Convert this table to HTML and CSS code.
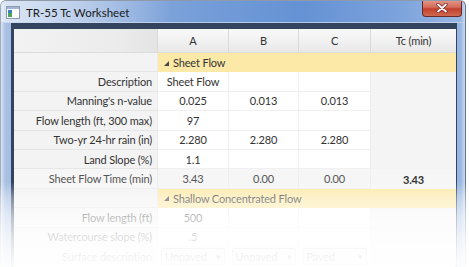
FILE: index.html
```html
<!DOCTYPE html>
<html>
<head>
<meta charset="utf-8">
<link rel="stylesheet" href="styles.css">
</head>
<body>
<div class="window">
  <div class="titlebar">
    <svg class="appicon" width="14" height="13" viewBox="0 0 14 13">
      <rect x="0.5" y="0.5" width="13" height="12" fill="#fdfdfd" stroke="#8a9bb0"/>
      <rect x="1" y="1" width="12" height="2" fill="#9fb8d8"/>
      <rect x="2" y="4" width="4" height="7" fill="#4da35a"/>
      <rect x="2" y="4" width="4" height="3" fill="#3f7fc0"/>
    </svg>
    <span class="title">TR-55 Tc Worksheet</span>
    <div class="close">
      <svg width="14" height="10" viewBox="0 0 14 10">
        <path d="M3 1.5 L11 8.5 M11 1.5 L3 8.5" stroke="#7a2a24" stroke-width="3.4" stroke-linecap="round"/>
        <path d="M3 1.5 L11 8.5 M11 1.5 L3 8.5" stroke="#ffffff" stroke-width="1.8" stroke-linecap="round"/>
      </svg>
    </div>
  </div>
  <div class="client">
    <div class="grid">
      <div class="hdr lblh"></div>
      <div class="hdr">A</div>
      <div class="hdr">B</div>
      <div class="hdr">C</div>
      <div class="hdr last">Tc (min)</div>

      <div class="lbl"></div>
      <div class="grp"><span class="tri"></span>Sheet Flow</div>

      <div class="lbl">Description</div>
      <div class="cell">Sheet Flow</div><div class="cell"></div><div class="cell"></div><div class="tc"></div>

      <div class="lbl">Manning's n-value</div>
      <div class="cell">0.025</div><div class="cell">0.013</div><div class="cell">0.013</div><div class="tc"></div>

      <div class="lbl">Flow length (ft, 300 max)</div>
      <div class="cell">97</div><div class="cell"></div><div class="cell"></div><div class="tc"></div>

      <div class="lbl">Two-yr 24-hr rain (in)</div>
      <div class="cell">2.280</div><div class="cell">2.280</div><div class="cell">2.280</div><div class="tc"></div>

      <div class="lbl">Land Slope (%)</div>
      <div class="cell">1.1</div><div class="cell"></div><div class="cell"></div><div class="tc"></div>

      <div class="lbl total">Sheet Flow Time (min)</div>
      <div class="cell total">3.43</div><div class="cell total">0.00</div><div class="cell total">0.00</div><div class="tc total strong">3.43</div>

      <div class="lbl"></div>
      <div class="grp"><span class="tri"></span>Shallow Concentrated Flow</div>

      <div class="lbl">Flow length (ft)</div>
      <div class="cell">500</div><div class="cell"></div><div class="cell"></div><div class="tc"></div>

      <div class="lbl">Watercourse slope (%)</div>
      <div class="cell">.5</div><div class="cell"></div><div class="cell"></div><div class="tc"></div>

      <div class="lbl">Surface description</div>
      <div class="cell"><span class="combo">Unpaved<span class="arr">▾</span></span></div>
      <div class="cell"><span class="combo">Unpaved<span class="arr">▾</span></span></div>
      <div class="cell"><span class="combo">Paved<span class="arr">▾</span></span></div>
      <div class="tc"></div>
    </div>
  </div>
</div>
<div class="fade"></div>
</body>
</html>
```

FILE: styles.css
```css
html, body {
  margin: 0;
  padding: 0;
  background: #ffffff;
  width: 469px;
  height: 267px;
  overflow: hidden;
  font-family: "Lato", "Noto Sans", sans-serif;
}

.window {
  width: 466px;
  height: 267px;
  overflow: hidden;
  box-sizing: border-box;
  padding: 0 8px 0 10px;
  background:
    linear-gradient(90deg, rgba(225,234,246,0.9) 0px, rgba(190,208,234,0.6) 3px, rgba(0,0,0,0) 5px),
    linear-gradient(270deg, rgba(210,222,240,0.9) 0px, rgba(0,0,0,0) 4px),
    linear-gradient(90deg, #a9c0e2 0%, #8eaddc 20%, #739cd8 45%, #6592d4 65%, #7ba2dc 85%, #9bb8e3 100%);
  border-top: 1px solid #8e9aaa;
  border-left: 1px solid #a0aab8;
  border-right: 1px solid #66758a;
  border-radius: 6px 6px 0 0;
  display: flex;
  flex-direction: column;
}

.titlebar {
  height: 22px;
  flex: none;
  display: flex;
  align-items: center;
  position: relative;
  margin-left: -5px;
}

.titlebar::before {
  content: "";
  position: absolute;
  left: -5px;
  top: 0;
  width: 170px;
  height: 22px;
  background: linear-gradient(90deg, rgba(232,240,250,0.8), rgba(232,240,250,0.45) 50%, rgba(232,240,250,0));
  pointer-events: none;
}

.titlebar::after {
  content: "";
  position: absolute;
  left: -5px;
  right: -8px;
  bottom: 0;
  height: 1px;
  background: rgba(200,215,238,0.8);
  pointer-events: none;
}

.appicon {
  position: relative;
  margin-top: 1px;
}

.title {
  position: relative;
  margin-left: 6px;
  font-family: "Lato", "Noto Sans", sans-serif;
  font-size: 11.5px;
  color: #1a1a1a;
  margin-top: 1px;
}

.close {
  position: absolute;
  right: -5px;
  top: -1px;
  width: 40px;
  height: 17px;
  border: 1px solid #6a2a26;
  border-top: none;
  border-radius: 0 0 4px 4px;
  background: linear-gradient(180deg, #e49a8c 0%, #d46b5a 45%, #c2402e 55%, #d06a50 100%);
  display: flex;
  align-items: center;
  justify-content: center;
  box-sizing: border-box;
}

.client {
  border: 3px solid #33445f;
  border-top-width: 6px;
  border-bottom: none;
  background: #ffffff;
  flex: 1;
  min-height: 0;
}

.grid {
  display: grid;
  grid-template-columns: 144px 71px 70px 72px 85px;
  grid-template-rows: 24px;
  grid-auto-rows: 19.4px;
  font-size: 11px;
  letter-spacing: -0.15px;
  color: #333333;
}

.grid > div {
  display: flex;
  align-items: center;
  box-sizing: border-box;
  white-space: nowrap;
}

.hdr {
  justify-content: center;
  background: linear-gradient(180deg, #f9f9f9 0%, #f1f1f1 50%, #e8e8e8 100%);
  border-right: 1px solid #d9d9d9;
  border-bottom: 1px solid #dcdcdc;
  color: #333;
}

.hdr.lblh {
  background: linear-gradient(90deg, #f2f2f2 0%, #ececec 70%, #e4e4e4 100%);
}

.hdr.last {
  border-right: none;
}

.lbl {
  justify-content: flex-end;
  padding-right: 5px;
  background: #f3f3f3;
  border-bottom: 1px solid #e6e6e6;
  border-right: 1px solid #ececec;
}

.cell {
  justify-content: center;
  background: #ffffff;
  border-bottom: 1px solid #f0f0f0;
  border-right: 1px solid #eeeeee;
}

.tc {
  justify-content: center;
  background: #f4f4f4;
}

.total {
  background: #f6f6f6;
  color: #555555;
  border-bottom-color: #ececec;
}

.strong {
  font-weight: bold;
  color: #333;
}

.grp {
  grid-column: span 4;
  background: #fce9a8;
  padding-left: 6px;
}

.tri {
  width: 0;
  height: 0;
  border-left: 5px solid transparent;
  border-bottom: 5px solid #444;
  margin-right: 4px;
  margin-top: 1px;
}

.combo {
  width: 64px;
  height: 17px;
  box-sizing: border-box;
  border: 1px solid #b8b8b8;
  border-radius: 2px;
  display: flex;
  align-items: center;
  justify-content: space-between;
  padding: 0 3px;
  background: #f4f4f4;
}

.arr {
  font-size: 9px;
  color: #444;
}

.fade {
  position: absolute;
  left: 0;
  top: 0;
  width: 469px;
  height: 267px;
  pointer-events: none;
  background: linear-gradient(180deg,
    rgba(255,255,255,0) 0px,
    rgba(255,255,255,0) 182px,
    rgba(255,255,255,0.4) 198px,
    rgba(255,255,255,0.67) 217px,
    rgba(255,255,255,0.83) 237px,
    rgba(255,255,255,0.93) 256px,
    rgba(255,255,255,0.97) 267px);
}
```
